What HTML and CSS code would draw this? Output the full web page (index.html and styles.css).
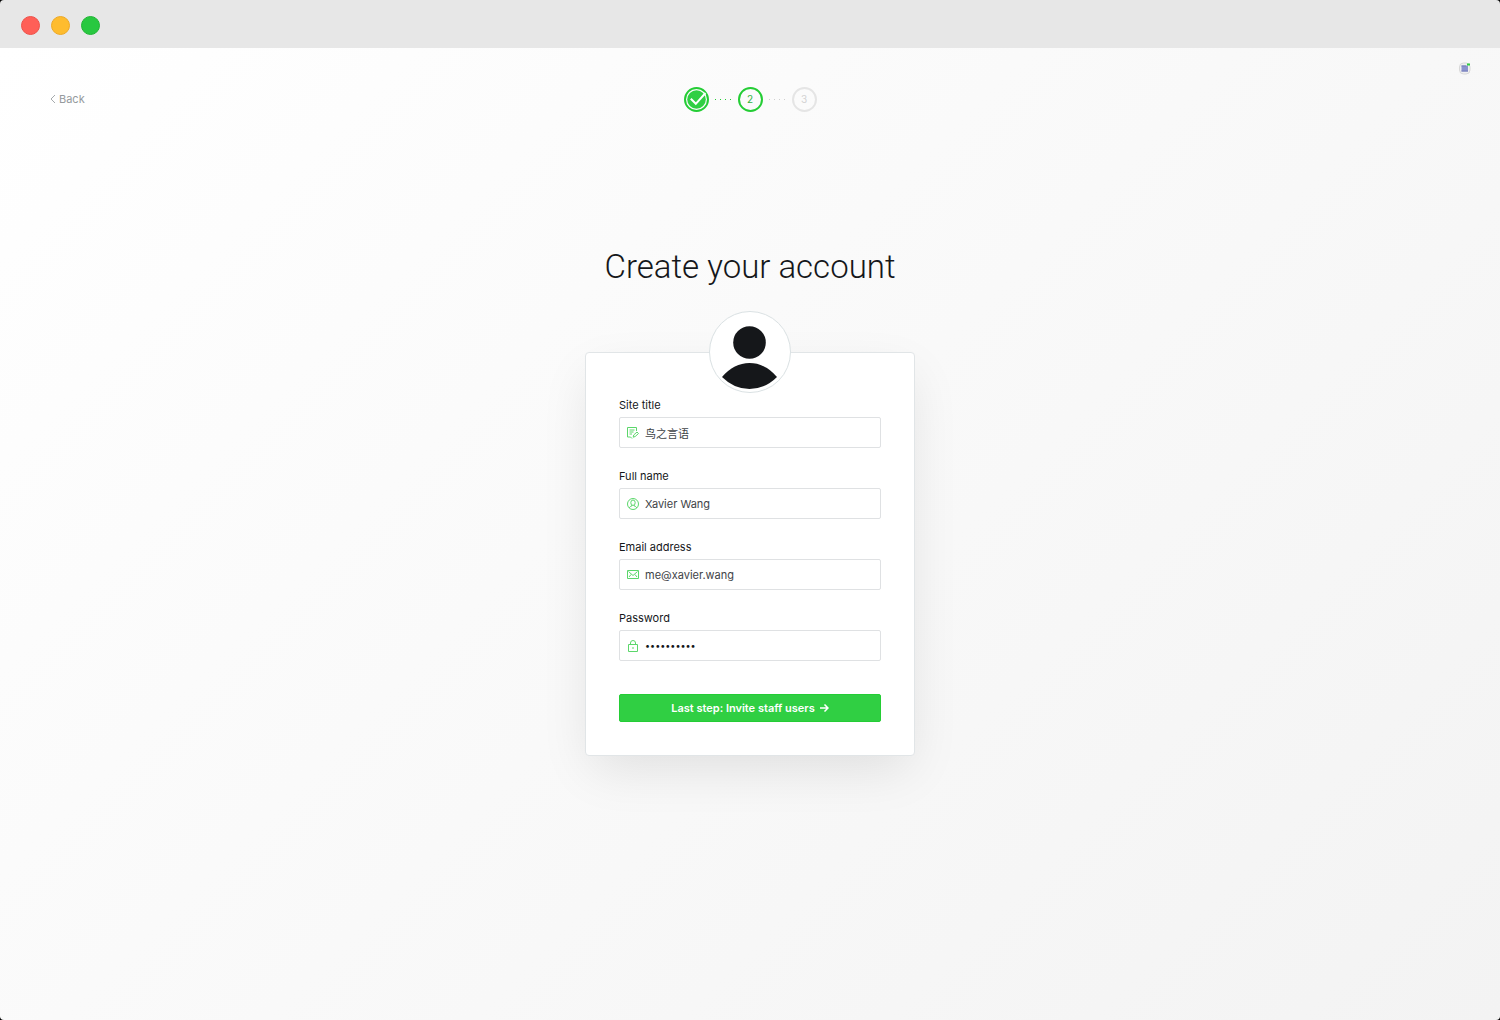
FILE: index.html
```
<!DOCTYPE html>
<html lang="en">
<head>
    <meta charset="UTF-8">
    <meta name="viewport" content="width=device-width, initial-scale=1.0">
    <title>Create your account</title>
    <link rel="stylesheet" href="styles.css">
</head>
<body>
    <div class="window">
        <div class="title-bar">
            <span class="dot red"></span>
            <span class="dot yellow"></span>
            <span class="dot green"></span>
        </div>

        <div class="page">
            <header class="header">
                <a class="back" href="#">
                    <svg width="6" height="8" viewBox="0 0 6 8"><path d="M5 0 1 4l4 4"/></svg>
                    Back
                </a>

                <nav class="steps">
                    <a class="step done" href="#" aria-label="Step 1">
                        <svg width="25" height="25" viewBox="0 0 25 25">
                            <circle class="ring" cx="12.5" cy="12.5" r="11.5"/>
                            <circle class="fill" cx="12.5" cy="12.5" r="9.3"/>
                            <path class="tick" d="M6.8 11.8l5 5L21.5 6"/>
                        </svg>
                    </a>
                    <span class="dots active"><i></i><i></i><i></i><i></i></span>
                    <a class="step current" href="#">2</a>
                    <span class="dots"><i></i><i></i><i></i><i></i></span>
                    <a class="step" href="#">3</a>
                </nav>

                <svg class="extension" width="14" height="14" viewBox="0 0 14 14">
                    <rect x="1.5" y="1" width="10.5" height="11" rx="4" fill="#f0f0f0" stroke="#d8d8d8"/>
                    <path d="M3.5 3.5H10v6H3.5z" fill="#8b94cf"/>
                    <path d="M3.5 4H8M3.5 9H10" stroke="#777eb8"/>
                    <rect x="9" y="1.5" width="3" height="2" fill="#2fd03f"/>
                </svg>
            </header>

            <main class="main">
                <h1>Create your account</h1>

                <form class="card">
                    <svg class="avatar" width="82" height="82" viewBox="0 0 82 82">
                        <circle cx="41" cy="41" r="40.5" fill="#fff" stroke="#dae1e3"/>
                        <circle cx="40.5" cy="31.5" r="16.3" fill="#15171a"/>
                        <path d="M13 66Q25 52 40.5 52T68 66Q56 78 40.5 78T13 66z" fill="#15171a"/>
                    </svg>

                    <div class="form-group">
                        <label for="title">Site title</label>
                        <div class="input-icon">
                            <svg width="12" height="12" viewBox="0 0 12 12">
                                <path d="M9.5 4V.5h-9V10h3L5 11.500M2.500 3h5M2.500 5h4M2.500 7H5M6.200 10.200l.5-2.200L10 5l1.500 1.500-3.300 3z"/>
                            </svg>
                            <input type="text" id="title" lang="zh-CN" value="鸟之言语">
                        </div>
                    </div>

                    <div class="form-group">
                        <label for="name">Full name</label>
                        <div class="input-icon">
                            <svg width="12" height="12" viewBox="0 0 12 12">
                                <circle cx="6" cy="6" r="5.5"/>
                                <ellipse cx="6" cy="4.7" rx="2.2" ry="2.7"/>
                                <path d="M2.3 10c.3-1.4 1.500-1.600 2.500-2V7M9.700 10c-.3-1.400-1.500-1.600-2.500-2V7"/>
                            </svg>
                            <input type="text" id="name" value="Xavier Wang">
                        </div>
                    </div>

                    <div class="form-group">
                        <label for="email">Email address</label>
                        <div class="input-icon">
                            <svg width="12" height="12" viewBox="0 0 12 12">
                                <path d="M.5 1.500h11v8H.5zM1.500 2.500l4.500 4 4.500-4M2 8l2-2.500M10 8L8 5.500"/>
                            </svg>
                            <input type="email" id="email" value="me@xavier.wang">
                        </div>
                    </div>

                    <div class="form-group">
                        <label for="password">Password</label>
                        <div class="input-icon">
                            <svg width="12" height="12" viewBox="0 0 12 12">
                                <path d="M1.500 4.500h9v7h-9zM3.500 4.500V3a2.500 2.500 0 0 1 5 0v1.500M6 7v2"/>
                            </svg>
                            <input type="password" id="password" value="0123456789">
                        </div>
                    </div>

                    <button type="submit">
                        Last step: Invite staff users
                        <svg width="10" height="8" viewBox="0 0 10 8"><path d="M1 4h8M5.500.5L9 4 5.500 7.500"/></svg>
                    </button>
                </form>
            </main>
        </div>
    </div>
</body>
</html>
```

FILE: styles.css
```
* {
    box-sizing: border-box;
}

body {
    margin: 0;
    background-color: #000;
    font-family: Inter, "Noto Sans CJK SC", sans-serif;
    font-size: 11px;
    color: #15171a;
}

a {
    text-decoration: none;
}

svg {
    fill: none;
    flex-shrink: 0;
}

.window {
    display: flex;
    flex-direction: column;
    min-height: 100vh;
    border-radius: 4px;
    overflow: hidden;
}

.title-bar {
    display: flex;
    align-items: center;
    gap: 11px;
    height: 48px;
    padding: 3px 21px 0;
    background-color: #e7e7e7;
}

.dot {
    width: 19px;
    height: 19px;
    border-radius: 50%;
}

.red {
    background-color: #ff5f57;
    border: 1px solid #ee5149;
}

.yellow {
    background-color: #febc2e;
    border: 1px solid #eda926;
}

.green {
    background-color: #28c840;
    border: 1px solid #20b534;
}

.page {
    flex: 1;
    background: linear-gradient(135deg, #fff, #f3f3f3);
}

.header {
    display: grid;
    grid-template-columns: 1fr auto 1fr;
    align-items: center;
    padding: 14px 28px 0;
}

.back {
    display: flex;
    align-items: center;
    gap: 3px;
    padding: 24px 0 0 22px;
    color: #959a9d;
}

.back svg {
    stroke: #a5aaad;
}

.steps {
    display: flex;
    align-items: center;
    padding-top: 25px;
}

.step {
    display: flex;
    align-items: center;
    justify-content: center;
    width: 25px;
    height: 25px;
    padding-bottom: 1px;
    border: 2px solid #e5e5e5;
    border-radius: 50%;
    font-size: 10px;
    line-height: 12px;
    color: #d3d3d3;
}

.step.done {
    padding: 0;
    border: none;
}

.step.current {
    border-color: #24cd35;
    color: #30b53e;
}

.ring {
    stroke: #24cd35;
    stroke-width: 2;
}

.fill {
    fill: #30cf43;
}

.tick {
    stroke: #fff;
    stroke-width: 2;
}

.dots {
    display: flex;
    justify-content: center;
    gap: 4px;
    width: 29px;
}

.dots i {
    width: 1px;
    height: 1px;
    background-color: #cfcfcf;
}

.dots.active i {
    background-color: #24cd35;
}

.extension {
    align-self: start;
    justify-self: end;
}

.main {
    display: flex;
    flex-direction: column;
    align-items: center;
    padding: 134px 20px 40px;
}

h1 {
    margin: 0 0 64px;
    font-family: Roboto, Inter, sans-serif;
    font-size: 33px;
    line-height: 42px;
    font-weight: 300;
}

.card {
    display: flex;
    flex-direction: column;
    width: 330px;
    max-width: 100%;
    padding: 0 33px 33px;
    background-color: #fff;
    border: 1px solid #e1e5e7;
    border-radius: 4px;
    box-shadow: 0 18px 48px -6px rgba(0, 0, 0, 0.1);
}

.avatar {
    align-self: center;
    margin: -42px 0 6px;
}

.form-group {
    margin-bottom: 22px;
}

label {
    display: block;
    margin-bottom: 5px;
    line-height: 13px;
}

.input-icon {
    display: flex;
    align-items: center;
    gap: 6px;
    height: 31px;
    padding: 0 7px;
    border: 1px solid #dfe1e3;
    border-radius: 2px;
}

.input-icon svg {
    stroke: #5bd76a;
}

input {
    flex: 1;
    min-width: 0;
    padding: 0;
    border: none;
    outline: none;
    background: none;
    font: inherit;
    color: #3e4347;
}

input[type="password"] {
    font-size: 9px;
    color: #15171a;
}

button {
    display: flex;
    align-items: center;
    justify-content: center;
    gap: 4px;
    height: 28px;
    margin-top: 11px;
    padding: 0;
    border: 1px solid #24cd35;
    border-radius: 2px;
    background-color: #30cf43;
    font: inherit;
    font-weight: 600;
    color: #fff;
    cursor: pointer;
}

button svg {
    stroke: #fff;
    stroke-width: 1.5;
}
```
